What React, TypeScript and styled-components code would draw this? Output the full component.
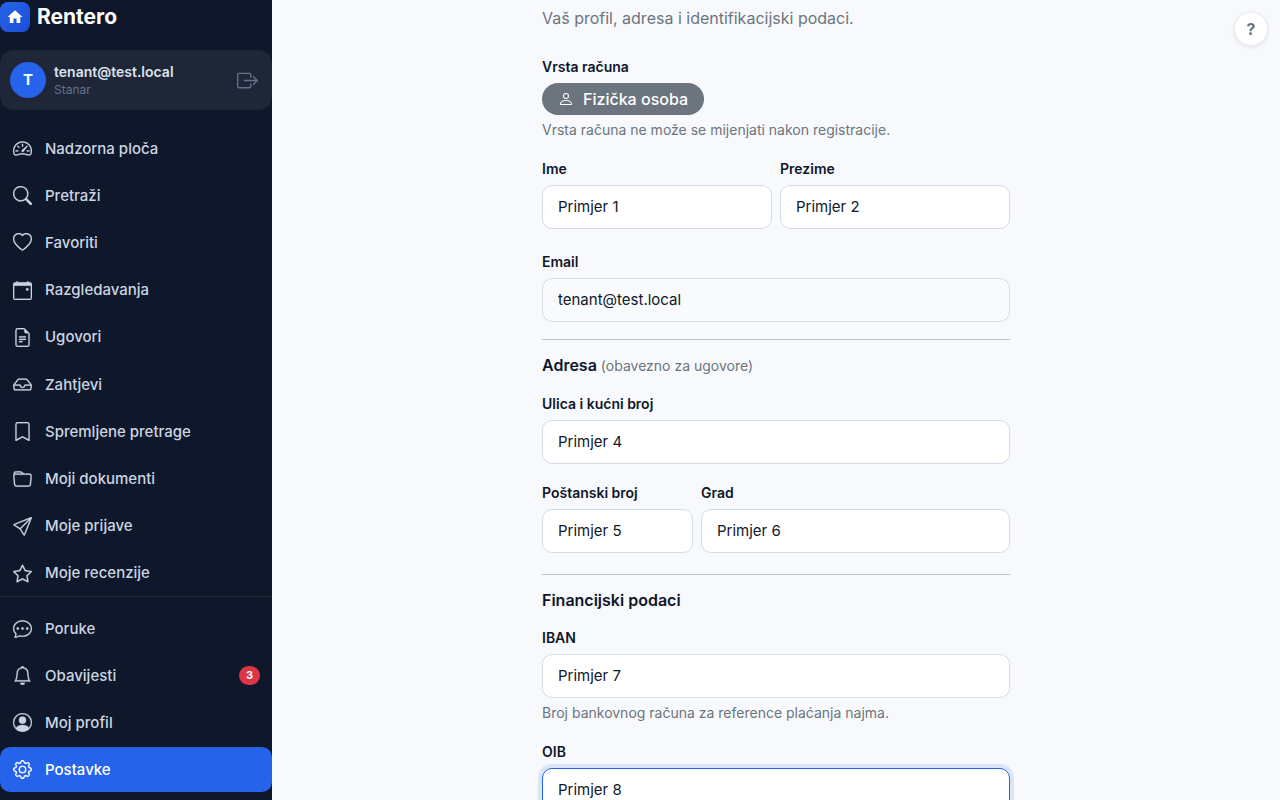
import React from "react";
import styled, { createGlobalStyle, css } from "styled-components";
import type { IconType } from "react-icons";
import {
  BsBell,
  BsBookmark,
  BsBoxArrowRight,
  BsCalendarEvent,
  BsChatDots,
  BsFileEarmarkText,
  BsFolder,
  BsGear,
  BsHeart,
  BsInbox,
  BsPerson,
  BsPersonCircle,
  BsSearch,
  BsSend,
  BsSpeedometer2,
  BsStar,
} from "react-icons/bs";

const GlobalStyle = createGlobalStyle`
  *, *::before, *::after { box-sizing: border-box; }
  body {
    margin: 0;
    background: #f7f9fc;
    color: #0f172a;
    font-family: Inter, "Liberation Sans", sans-serif;
    font-size: 16px;
    line-height: 24px;
  }
`;

const Shell = styled.div`
  display: grid;
  grid-template-columns: 272px minmax(0, 1fr);
  height: 100vh;
`;

const Sidebar = styled.aside`
  display: flex;
  flex-direction: column;
  height: 100vh;
  padding: 2px 0 8px;
  background: #0f172a;
  overflow: hidden auto;
  scrollbar-width: none;
`;

const Brand = styled.a`
  display: flex;
  align-items: center;
  gap: 7px;
  height: 30px;
  flex: none;
  color: #fff;
  font-size: 21px;
  font-weight: 700;
  text-decoration: none;
`;

const BrandMark = styled.span`
  display: grid;
  place-items: center;
  width: 30px;
  height: 30px;
  border-radius: 8px;
  background: linear-gradient(135deg, #2563eb, #1d4ed8);
`;

const UserCard = styled.section`
  display: flex;
  align-items: center;
  gap: 8px;
  flex: none;
  height: 60px;
  margin: 18px 0 16px;
  padding: 0 10px;
  border-radius: 14px;
  background: #1f2637;
`;

const Avatar = styled.span`
  display: grid;
  place-items: center;
  width: 36px;
  height: 36px;
  border-radius: 50%;
  background: #2563eb;
  color: #fff;
  font-size: 15px;
  font-weight: 700;
`;

const UserText = styled.div`
  flex: 1;
  min-width: 0;
  padding-top: 2px;
`;

const UserName = styled.div`
  color: #dbe2ec;
  font-size: 14px;
  font-weight: 600;
  line-height: 18px;
`;

const UserRole = styled.div`
  color: #64748b;
  font-size: 12px;
  line-height: 18px;
`;

const LogoutButton = styled.button`
  display: grid;
  place-items: center;
  padding: 4px;
  border: 0;
  background: none;
  color: #64748b;
  font-size: 21px;
  cursor: pointer;
`;

const navLayout = css`
  display: flex;
  flex-direction: column;
  margin: 0;
  padding: 0;
  list-style: none;
`;

const MainNav = styled.ul`
  ${navLayout}
  justify-content: space-between;
  height: 100%;
`;

const NavArea = styled.nav`
  flex: 1;
`;

const AccountNav = styled.nav`
  flex: none;
  padding-top: 9px;
  border-top: 1px solid #232b3c;
`;

const AccountList = styled.ul`
  ${navLayout}
  gap: 2px;
`;

const NavLink = styled.a<{ $active?: boolean }>`
  display: flex;
  align-items: center;
  gap: 13px;
  height: 45px;
  padding: 0 12px 0 13px;
  border-radius: 10px;
  background: ${(p) => (p.$active ? "#2563eb" : "transparent")};
  color: ${(p) => (p.$active ? "#fff" : "#cbd5e1")};
  font-size: 15px;
  font-weight: 500;
  text-decoration: none;

  svg {
    flex: none;
    width: 19px;
    height: 19px;
    stroke: currentColor;
    stroke-width: 0.2;
  }
`;

const CountBadge = styled.span`
  margin-left: auto;
  padding: 0 7px;
  border-radius: 10px;
  background: #dc3545;
  color: #fff;
  font-size: 11px;
  font-weight: 700;
  line-height: 19px;
`;

const Main = styled.main`
  height: 100vh;
  padding: 6px 36px 36px;
  overflow-y: auto;
  scrollbar-width: none;
`;

const Form = styled.form`
  max-width: 468px;
  margin: 0 auto;
`;

const Lead = styled.p`
  margin: 0 0 27px;
  color: #6c757d;
`;

const FieldBox = styled.div<{ $space?: number }>`
  flex: 1;
  min-width: 0;
  margin-bottom: ${(p) => p.$space ?? 0}px;
`;

const labelText = css`
  display: block;
  margin-bottom: 6px;
  font-size: 14px;
  font-weight: 600;
  line-height: 20px;
`;

const Label = styled.label`
  ${labelText}
`;

const Caption = styled.div`
  ${labelText}
`;

const focusRing = css`
  border-color: #2563eb;
  box-shadow: 0 0 0 4px #dbe5f9;
`;

const Input = styled.input<{ $current?: boolean }>`
  display: block;
  width: 100%;
  height: 44px;
  padding: 0 15px 2px;
  border: 1px solid #d5dce6;
  border-radius: 10px;
  background: #fff;
  color: #0f172a;
  font-family: inherit;
  font-size: 15px;
  outline: 0;

  &:read-only {
    background: #f8fafc;
  }

  ${(p) => p.$current && focusRing}

  &:focus {
    ${focusRing}
  }
`;

const Hint = styled.p`
  margin: 5px 0 0;
  color: #6c757d;
  font-size: 14px;
  line-height: 20px;
`;

const TypeBadge = styled.span`
  display: inline-flex;
  align-items: center;
  gap: 9px;
  height: 32px;
  padding: 0 16px;
  border-radius: 16px;
  background: #6c757d;
  color: #fff;
  font-weight: 500;
  vertical-align: top;
`;

const Row = styled.div<{ $columns: string; $space: number }>`
  display: grid;
  grid-template-columns: ${(p) => p.$columns};
  gap: 8px;
  margin-bottom: ${(p) => p.$space}px;
`;

const Divider = styled.hr`
  height: 1px;
  margin: 0 0 13px;
  border: 0;
  background: #bfc3c9;
`;

const SectionTitle = styled.h2`
  margin: 0 0 16px;
  font-size: 16px;
  font-weight: 600;
  line-height: 24px;
`;

const TitleNote = styled.span`
  color: #6c757d;
  font-size: 14px;
  font-weight: 400;
`;

const HelpButton = styled.button`
  position: fixed;
  top: 12px;
  right: 12px;
  width: 34px;
  height: 34px;
  padding: 0;
  border: 1px solid #e8edf3;
  border-radius: 50%;
  background: #fff;
  box-shadow: 0 1px 4px rgba(15, 23, 42, 0.1);
  color: #64748b;
  font-family: inherit;
  font-size: 16px;
  font-weight: 700;
  cursor: pointer;
`;

type NavEntry = { label: string; icon: IconType; active?: boolean; count?: number };

const mainEntries: NavEntry[] = [
  { label: "Nadzorna ploča", icon: BsSpeedometer2 },
  { label: "Pretraži", icon: BsSearch },
  { label: "Favoriti", icon: BsHeart },
  { label: "Razgledavanja", icon: BsCalendarEvent },
  { label: "Ugovori", icon: BsFileEarmarkText },
  { label: "Zahtjevi", icon: BsInbox },
  { label: "Spremljene pretrage", icon: BsBookmark },
  { label: "Moji dokumenti", icon: BsFolder },
  { label: "Moje prijave", icon: BsSend },
  { label: "Moje recenzije", icon: BsStar },
];

const accountEntries: NavEntry[] = [
  { label: "Poruke", icon: BsChatDots },
  { label: "Obavijesti", icon: BsBell, count: 3 },
  { label: "Moj profil", icon: BsPersonCircle },
  { label: "Postavke", icon: BsGear, active: true },
];

function NavItem({ label, icon: Icon, active, count }: NavEntry) {
  return (
    <li>
      <NavLink href="#" $active={active} aria-current={active ? "page" : undefined}>
        <Icon aria-hidden />
        {label}
        {count !== undefined && <CountBadge>{count}</CountBadge>}
      </NavLink>
    </li>
  );
}

type FieldProps = {
  id: string;
  label: string;
  value: string;
  hint?: string;
  space?: number;
  readOnly?: boolean;
  current?: boolean;
};

function Field({ id, label, value, hint, space, readOnly, current }: FieldProps) {
  return (
    <FieldBox $space={space}>
      <Label htmlFor={id}>{label}</Label>
      <Input id={id} defaultValue={value} readOnly={readOnly} $current={current} />
      {hint && <Hint>{hint}</Hint>}
    </FieldBox>
  );
}

export default function App() {
  return (
    <>
      <GlobalStyle />
      <Shell>
        <Sidebar>
          <Brand href="#">
            <BrandMark>
              <svg width="18" height="18" viewBox="0 0 24 24" fill="#fff" aria-hidden>
                <path d="M10 20v-6h4v6h5v-8h3L12 3 2 12h3v8z" />
              </svg>
            </BrandMark>
            Rentero
          </Brand>
          <UserCard>
            <Avatar>T</Avatar>
            <UserText>
              <UserName>tenant@test.local</UserName>
              <UserRole>Stanar</UserRole>
            </UserText>
            <LogoutButton type="button" aria-label="Odjava">
              <BsBoxArrowRight />
            </LogoutButton>
          </UserCard>
          <NavArea>
            <MainNav>
              {mainEntries.map((entry) => (
                <NavItem key={entry.label} {...entry} />
              ))}
            </MainNav>
          </NavArea>
          <AccountNav>
            <AccountList>
              {accountEntries.map((entry) => (
                <NavItem key={entry.label} {...entry} />
              ))}
            </AccountList>
          </AccountNav>
        </Sidebar>

        <Main>
          <Form>
            <Lead>Vaš profil, adresa i identifikacijski podaci.</Lead>
            <FieldBox $space={19}>
              <Caption>Vrsta računa</Caption>
              <TypeBadge>
                <BsPerson aria-hidden />
                Fizička osoba
              </TypeBadge>
              <Hint>Vrsta računa ne može se mijenjati nakon registracije.</Hint>
            </FieldBox>
            <Row $columns="1fr 1fr" $space={23}>
              <Field id="first-name" label="Ime" value="Primjer 1" />
              <Field id="last-name" label="Prezime" value="Primjer 2" />
            </Row>
            <Field id="email" label="Email" value="tenant@test.local" space={17} readOnly />

            <Divider />
            <SectionTitle>
              Adresa <TitleNote>(obavezno za ugovore)</TitleNote>
            </SectionTitle>
            <Field id="street" label="Ulica i kućni broj" value="Primjer 4" space={19} />
            <Row $columns="151px 1fr" $space={21}>
              <Field id="postcode" label="Poštanski broj" value="Primjer 5" />
              <Field id="city" label="Grad" value="Primjer 6" />
            </Row>

            <Divider />
            <SectionTitle>Financijski podaci</SectionTitle>
            <Field
              id="iban"
              label="IBAN"
              value="Primjer 7"
              hint="Broj bankovnog računa za reference plaćanja najma."
              space={19}
            />
            <Field id="oib" label="OIB" value="Primjer 8" current />
          </Form>
        </Main>
      </Shell>
      <HelpButton type="button" aria-label="Pomoć">
        ?
      </HelpButton>
    </>
  );
}
